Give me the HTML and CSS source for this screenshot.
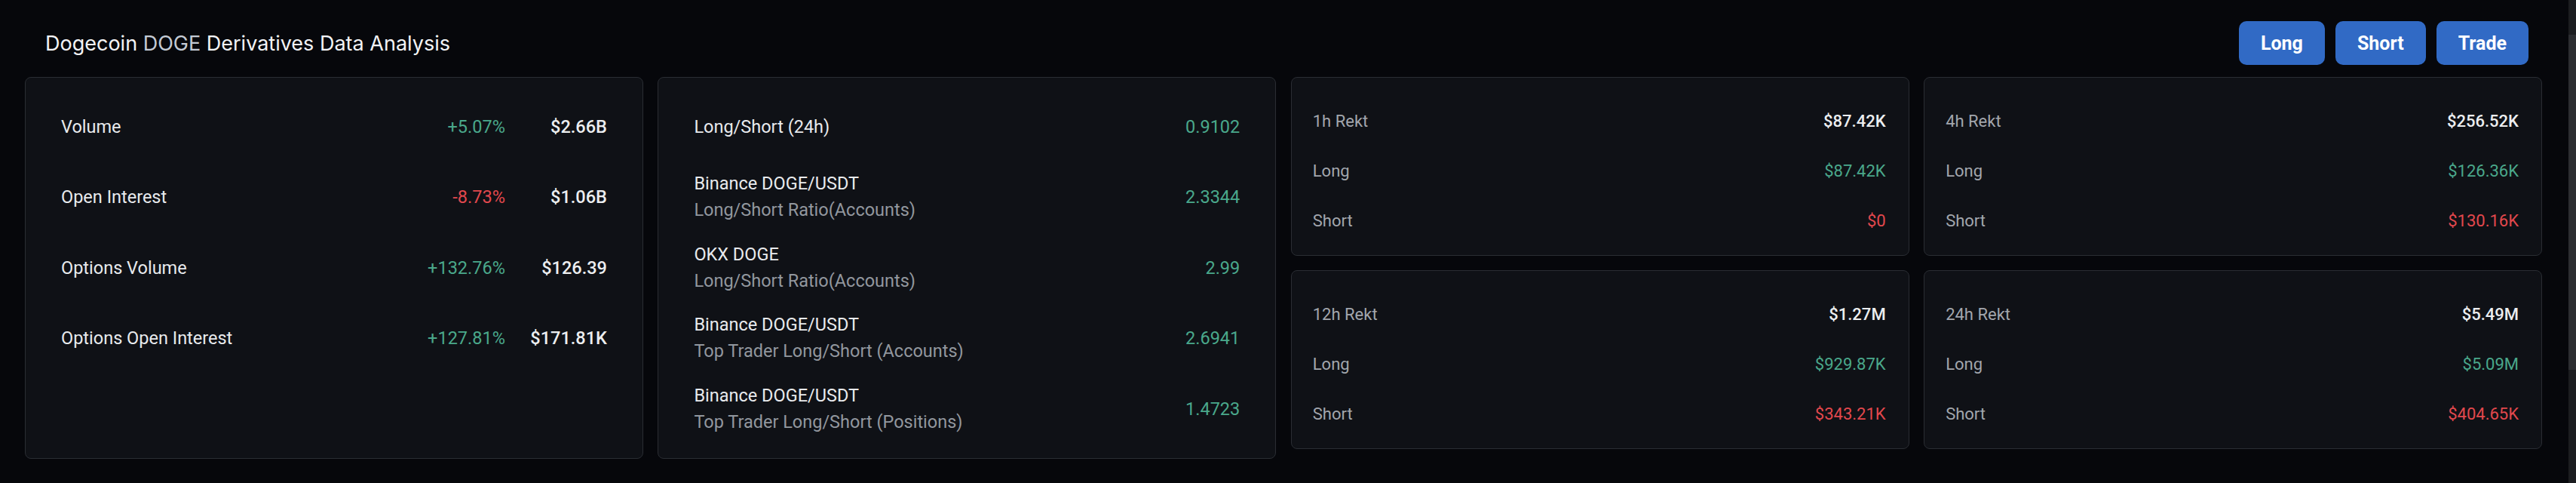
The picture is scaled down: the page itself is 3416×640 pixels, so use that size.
FILE: index.html
```html
<!DOCTYPE html>
<html lang="en">
<head>
<meta charset="utf-8">
<title>Dogecoin DOGE Derivatives Data Analysis</title>
<link rel="stylesheet" href="styles.css">
</head>
<body>
<div class="app">
  <main class="page">
    <header class="header">
      <h1 class="title">Dogecoin <span class="sym">DOGE</span> Derivatives Data Analysis</h1>
      <div class="actions">
        <button class="btn">Long</button>
        <button class="btn">Short</button>
        <button class="btn">Trade</button>
      </div>
    </header>
    <section class="grid">
      <div class="card card-big">
        <div class="row"><span class="label">Volume</span><span class="pct up">+5.07%</span><span class="val">$2.66B</span></div>
        <div class="row"><span class="label">Open Interest</span><span class="pct down">-8.73%</span><span class="val">$1.06B</span></div>
        <div class="row"><span class="label">Options Volume</span><span class="pct up">+132.76%</span><span class="val">$126.39</span></div>
        <div class="row"><span class="label">Options Open Interest</span><span class="pct up">+127.81%</span><span class="val">$171.81K</span></div>
      </div>
      <div class="card card-big">
        <div class="row"><div class="label">Long/Short (24h)</div><span class="ratio up">0.9102</span></div>
        <div class="row"><div class="label"><div class="l1">Binance DOGE/USDT</div><div class="l2">Long/Short Ratio(Accounts)</div></div><span class="ratio up">2.3344</span></div>
        <div class="row"><div class="label"><div class="l1">OKX DOGE</div><div class="l2">Long/Short Ratio(Accounts)</div></div><span class="ratio up">2.99</span></div>
        <div class="row"><div class="label"><div class="l1">Binance DOGE/USDT</div><div class="l2">Top Trader Long/Short (Accounts)</div></div><span class="ratio up">2.6941</span></div>
        <div class="row"><div class="label"><div class="l1">Binance DOGE/USDT</div><div class="l2">Top Trader Long/Short (Positions)</div></div><span class="ratio up">1.4723</span></div>
      </div>
      <div class="stack">
        <div class="card rekt">
          <div class="row"><span class="label">1h Rekt</span><span class="amt">$87.42K</span></div>
          <div class="row"><span class="label">Long</span><span class="amt up">$87.42K</span></div>
          <div class="row"><span class="label">Short</span><span class="amt down">$0</span></div>
        </div>
        <div class="card rekt">
          <div class="row"><span class="label">12h Rekt</span><span class="amt">$1.27M</span></div>
          <div class="row"><span class="label">Long</span><span class="amt up">$929.87K</span></div>
          <div class="row"><span class="label">Short</span><span class="amt down">$343.21K</span></div>
        </div>
      </div>
      <div class="stack">
        <div class="card rekt">
          <div class="row"><span class="label">4h Rekt</span><span class="amt">$256.52K</span></div>
          <div class="row"><span class="label">Long</span><span class="amt up">$126.36K</span></div>
          <div class="row"><span class="label">Short</span><span class="amt down">$130.16K</span></div>
        </div>
        <div class="card rekt">
          <div class="row"><span class="label">24h Rekt</span><span class="amt">$5.49M</span></div>
          <div class="row"><span class="label">Long</span><span class="amt up">$5.09M</span></div>
          <div class="row"><span class="label">Short</span><span class="amt down">$404.65K</span></div>
        </div>
      </div>
    </section>
  </main>
  <div class="scrollbar"><div class="thumb"></div></div>
</div>
</body>
</html>
```
FILE: styles.css
```css
html, body {
  margin: 0;
  padding: 0;
  background: #06070b;
}

body {
  font-family: Roboto, "Liberation Sans", sans-serif;
  color: #e6e8eb;
}

.app {
  display: flex;
  height: 640px;
}

.page {
  flex: 1;
  min-width: 0;
  padding: 28px 35px 0 33px;
}

.header {
  display: flex;
  align-items: center;
  justify-content: space-between;
  height: 58px;
  padding: 0 18px 0 27px;
  margin-bottom: 16px;
}

.title {
  margin: 0;
  font-family: Inter, "Liberation Sans", sans-serif;
  font-size: 27px;
  font-weight: 400;
  color: #f2f3f5;
}

.sym {
  color: #c3cad4;
}

.actions {
  display: flex;
  gap: 14px;
}

.btn {
  height: 58px;
  padding: 0 29px;
  border: 0;
  border-radius: 10px;
  background: #316ac5;
  color: #ffffff;
  font-family: Roboto, "Liberation Sans", sans-serif;
  font-size: 25px;
  font-weight: 700;
}

.grid {
  display: grid;
  grid-template-columns: repeat(4, 1fr);
  column-gap: 19.5px;
  align-items: start;
}

.card {
  box-sizing: border-box;
  background: #0f1116;
  border: 1px solid #2a2d33;
  border-radius: 8px;
}

.card-big {
  align-self: stretch;
  padding: 18px 47px;
  font-size: 23.5px;
}

.card-big .row {
  display: flex;
  align-items: center;
  height: 93.5px;
}

.label {
  flex: 1;
  min-width: 0;
}

.card-big .label {
  color: #e8eaed;
}

.pct {
  text-align: right;
}

.val {
  width: 135px;
  text-align: right;
  font-weight: 500;
  color: #eceef0;
}

.l1 {
  line-height: 35px;
  color: #e8eaed;
}

.l2 {
  line-height: 35px;
  color: #92979e;
}

.ratio {
  text-align: right;
}

.up {
  color: #4aa88b;
}

.down {
  color: #e2484d;
}

.stack {
  display: flex;
  flex-direction: column;
  gap: 19px;
}

.rekt {
  padding: 24px 30px 13px 28px;
  font-size: 22px;
}

.rekt .row {
  display: flex;
  align-items: center;
  height: 66px;
}

.rekt .label {
  color: #a2a6ad;
}

.amt {
  text-align: right;
  font-weight: 500;
  color: #eceef0;
}

.amt.up {
  color: #4aa88b;
  font-weight: 400;
}

.amt.down {
  color: #e2484d;
  font-weight: 400;
}

.scrollbar {
  width: 10px;
  background: #1c1d20;
  padding-top: 46px;
  box-sizing: border-box;
}

.thumb {
  height: 444px;
  background: #2c2d31;
}
```
